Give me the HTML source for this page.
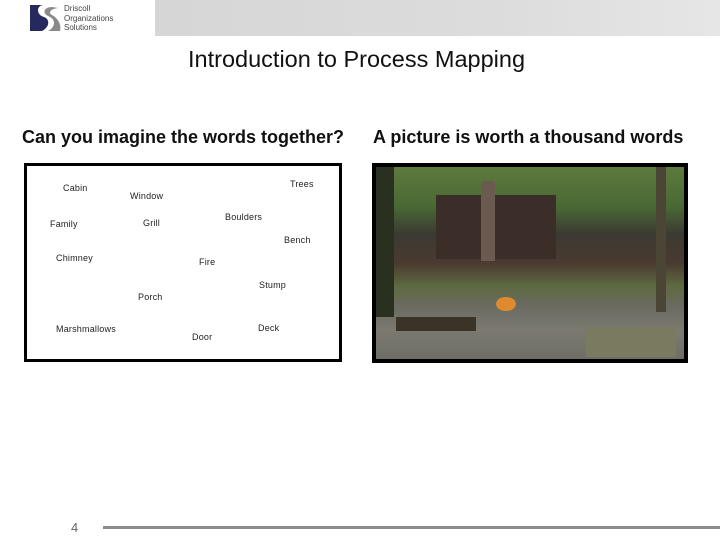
<!DOCTYPE html>
<html><head><style>
body{margin:0;width:720px;height:540px;background:#fff;position:relative;overflow:hidden;font-family:"Liberation Sans",sans-serif}
.a{position:absolute;white-space:nowrap}
.w{position:absolute;font-size:9px;color:#222;white-space:nowrap;letter-spacing:0.2px}
</style></head><body>
<div class="a" style="left:155px;top:0;width:565px;height:36px;background:linear-gradient(90deg,#d6d6d6,#dcdcdc 60%,#e6e6e6)"></div>
<svg class="a" style="left:30px;top:5px" width="32" height="26" viewBox="0 0 32 26">
<rect x="0" y="0" width="28" height="26" fill="#26295e"/>
<path d="M28 0 H14 C6 0 6 10 14 12 C20 14 20 22 12 26 H28 Z" fill="#fff"/>
<path d="M22 2 C14 2 12 8 18 11 C26 14 26 22 18 26 H30 C32 18 26 12 22 10 C18 8 20 4 28 3 Z" fill="#8a8a8a"/>
</svg>
<div class="a" style="left:64px;top:4px;font-size:8px;line-height:9.5px;color:#444">Driscoll<br>Organizations<br>Solutions</div>
<div class="a" style="left:188px;top:46px;font-size:23.5px;color:#111">Introduction to Process Mapping</div>
<div class="a" style="left:22px;top:127px;font-size:18px;font-weight:bold;color:#111">Can you imagine the words together?</div>
<div class="a" style="left:373px;top:127px;font-size:18px;font-weight:bold;color:#111">A picture is worth a thousand words</div>
<div class="a" style="left:24px;top:163px;width:312px;height:193px;border:3px solid #000"></div>
<div class="w" style="left:63px;top:183px">Cabin</div>
<div class="w" style="left:130px;top:191px">Window</div>
<div class="w" style="left:290px;top:179px">Trees</div>
<div class="w" style="left:50px;top:219px">Family</div>
<div class="w" style="left:143px;top:218px">Grill</div>
<div class="w" style="left:225px;top:212px">Boulders</div>
<div class="w" style="left:284px;top:235px">Bench</div>
<div class="w" style="left:56px;top:253px">Chimney</div>
<div class="w" style="left:199px;top:257px">Fire</div>
<div class="w" style="left:259px;top:280px">Stump</div>
<div class="w" style="left:138px;top:292px">Porch</div>
<div class="w" style="left:56px;top:324px">Marshmallows</div>
<div class="w" style="left:258px;top:323px">Deck</div>
<div class="w" style="left:192px;top:332px">Door</div>
<div class="a" style="left:372px;top:163px;width:308px;height:192px;border:4px solid #000;background:linear-gradient(180deg,#5d7a3e 0%,#4a6a34 20%,#3b3a32 35%,#4a3a30 50%,#5d6a40 62%,#6a6a60 72%,#7c7a70 85%,#6e6e66 100%);overflow:hidden">
<div class="a" style="left:60px;top:28px;width:120px;height:64px;background:#3b2e28"></div>
<div class="a" style="left:105px;top:14px;width:14px;height:80px;background:#6a5a50"></div>
<div class="a" style="left:0;top:0;width:18px;height:150px;background:#2a3020"></div>
<div class="a" style="left:280px;top:0;width:10px;height:145px;background:#4a4535"></div>
<div class="a" style="left:120px;top:130px;width:20px;height:14px;background:#e08a30;border-radius:50%"></div>
<div class="a" style="left:20px;top:150px;width:80px;height:14px;background:#3a3428"></div>
<div class="a" style="left:210px;top:160px;width:90px;height:30px;background:#7a7a60"></div>
</div>
<div class="a" style="left:103px;top:526px;width:617px;height:3px;background:#8c8c8c"></div>
<div class="a" style="left:71px;top:520px;font-size:13px;color:#666">4</div>
</body></html>
